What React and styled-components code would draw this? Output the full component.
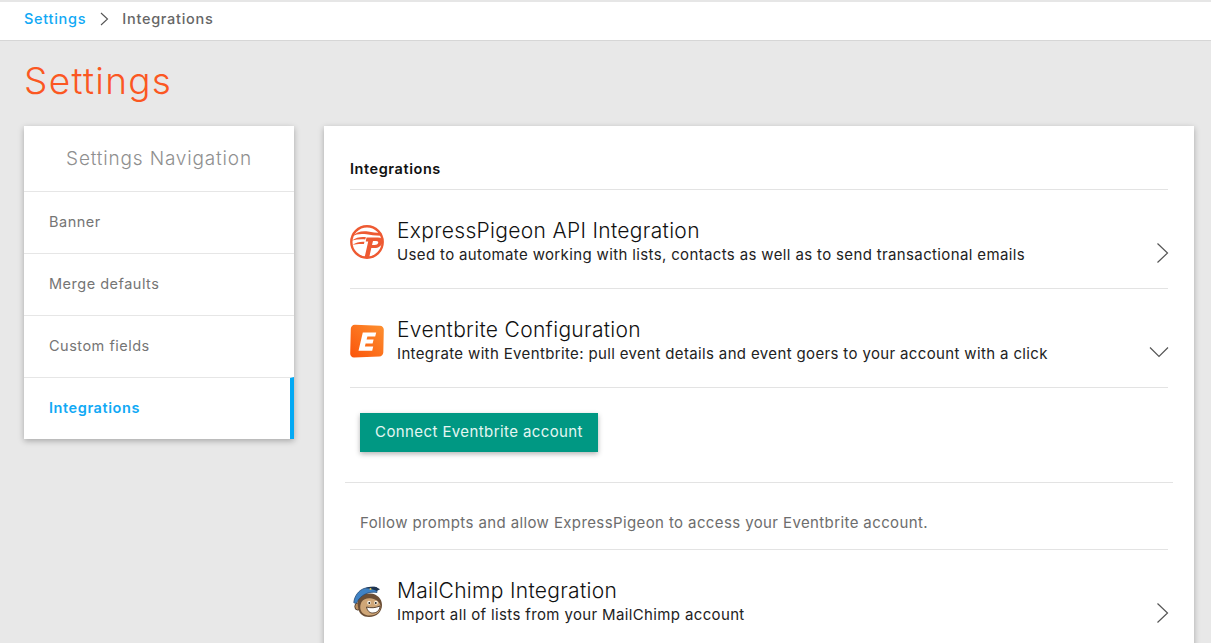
import React from "react";
import styled, { createGlobalStyle } from "styled-components";

const GlobalStyle = createGlobalStyle`
  html, body {
    margin: 0;
    height: 100%;
    overflow: hidden;
    background: #e8e8e8;
  }
  * {
    box-sizing: border-box;
  }
  body {
    font-family: Inter, "Open Sans", "Liberation Sans", sans-serif;
  }
`;

const Page = styled.div`
  height: 643px;
  overflow: hidden;
  background: #e8e8e8;
`;

const TopBar = styled.div`
  height: 41px;
  background: #fff;
  border-top: 2px solid #e6e6e6;
  border-bottom: 1px solid #d6d6d6;
  display: flex;
  align-items: center;
  padding: 0 0 5px 24px;
  font-size: 14.5px;
  font-weight: 500;
  letter-spacing: 0.72px;
`;

const Crumb = styled.span`
  color: ${(p) => (p.$active ? "#11a9f5" : "#666")};
`;

const CrumbArrow = styled.svg`
  width: 9px;
  height: 14px;
  margin: 0 13px 0 14px;
`;

const Title = styled.h1`
  margin: 0;
  height: 85px;
  padding: 18px 0 0 24px;
  font-size: 37px;
  line-height: 44px;
  font-weight: 300;
  letter-spacing: 1.3px;
  color: #fb5722;
`;

const Columns = styled.div`
  display: flex;
  align-items: flex-start;
  gap: 30px;
  padding: 0 17px 0 24px;
`;

const Sidebar = styled.nav`
  width: 270px;
  flex: none;
  background: #fff;
  box-shadow: 0 2px 6px rgba(0, 0, 0, 0.28);
`;

const SidebarTitle = styled.div`
  height: 65px;
  display: flex;
  align-items: center;
  justify-content: center;
  font-size: 19px;
  font-weight: 300;
  letter-spacing: 0.83px;
  color: #8f8f8f;
`;

const NavItem = styled.div`
  height: 62px;
  display: flex;
  align-items: center;
  padding: 0 0 3px 25px;
  border-top: 1px solid #e6e6e6;
  border-right: ${(p) => (p.$active ? "4px solid #03a9f4" : "none")};
  font-size: 14.5px;
  font-weight: ${(p) => (p.$active ? 600 : 400)};
  letter-spacing: ${(p) => (p.$active ? "0.58px" : "0.5px")};
  color: ${(p) => (p.$active ? "#11a9f5" : "#757575")};
`;

const Main = styled.main`
  flex: 1;
  height: 540px;
  background: #fff;
  box-shadow: 0 2px 6px rgba(0, 0, 0, 0.28);
  padding: 0 26px;
`;

const SectionTitle = styled.div`
  height: 64px;
  padding-top: 34px;
  font-size: 14.5px;
  line-height: 18px;
  font-weight: 600;
  letter-spacing: 0.57px;
  color: #111;
  border-bottom: 1px solid #e3e3e3;
`;

const Row = styled.div`
  height: 99px;
  display: flex;
  align-items: center;
  gap: 13px;
  padding-top: 6px;
  border-bottom: 1px solid ${(p) => (p.$plain ? "transparent" : "#e3e3e3")};
`;

const RowIcon = styled.svg`
  width: 34px;
  height: 34px;
  flex: none;
`;

const RowText = styled.div`
  flex: 1;
`;

const RowTitle = styled.div`
  font-size: 21px;
  line-height: 24px;
  font-weight: 300;
  letter-spacing: 0.32px;
  color: #111;
`;

const RowSub = styled.div`
  font-size: 15px;
  line-height: 23px;
  letter-spacing: 0.36px;
  color: #222;
`;

const Chevron = styled.svg`
  flex: none;
  width: 20px;
  height: 20px;
  margin-top: 22px;
  margin-right: ${(p) => (p.$down ? "-1px" : "-5px")};
`;

const ButtonZone = styled.div`
  height: 95px;
  margin: 0 -5px;
  padding: 25px 15px 0;
  border-bottom: 1px solid #e3e3e3;
`;

const ConnectButton = styled.button`
  width: 238px;
  height: 39px;
  padding: 0 0 2px;
  border: none;
  border-radius: 0;
  background: #009883;
  box-shadow: 0 2px 5px rgba(0, 0, 0, 0.3);
  color: #e4f6f2;
  font-family: inherit;
  font-size: 15px;
  font-weight: 400;
  letter-spacing: 0.4px;
`;

const Hint = styled.div`
  height: 67px;
  padding: 30px 10px 0;
  font-size: 15px;
  line-height: 20px;
  letter-spacing: 0.39px;
  color: #6d6d6d;
  border-bottom: 1px solid #e3e3e3;
`;

const PigeonLogo = () => (
  <RowIcon viewBox="0 0 34 34">
    <circle cx="17" cy="17" r="15.7" fill="none" stroke="#ee5a32" strokeWidth="2.4" />
    <path d="M2 11.500C6 7 12 5.500 18 6.500c4 .7 8 1.500 13 1.500l1 2.600c-6 .2-11-.6-15.500-1.300C11 8.500 6 9 2 11.500z" fill="#ee5a32" />
    <path d="M2 15.500c4-3 9-4 14-3.300l-.8 2.300c-4.500-.5-9 .1-13.200 1z" fill="#ee5a32" />
    <path d="M2.500 20c3.500-2.500 7.500-3.500 12-3.200l-.6 2.200c-4-.2-8 0-11.400 1z" fill="#ee5a32" />
    <path d="M16.500 12.500H28c4 0 5 2.500 4.300 5.200-.8 3.200-3.800 5.300-7.800 5.300h-3.200L19.300 32h-4.600l3.500-15.500h-2.500z" fill="#ee5a32" />
    <path d="M23 16l-1 4h2.700c1.800 0 3.200-.8 3.500-2.200.2-1.100-.5-1.800-2-1.800z" fill="#fff" />
  </RowIcon>
);

const EventbriteLogo = () => (
  <RowIcon viewBox="0 0 34 34">
    <defs>
      <linearGradient id="ebFill" x1="0" y1="1" x2="1" y2="0">
        <stop offset="0" stopColor="#fb540a" />
        <stop offset="1" stopColor="#fd9030" />
      </linearGradient>
    </defs>
    <path d="M5 .8 30 1.800c2.200.1 3.800 1.800 3.800 4L33.300 28.500c-.1 2.300-1.800 4-4 4L4 33.400c-2.200 0-3.900-1.700-3.800-4L.8 4.800C.9 2.400 2.700.7 5 .8z" fill="url(#ebFill)" />
    <path d="M12.800 8.500h13.400l-1 4H17.400l-.8 3h7l-1 4h-7l-.7 3h8.300l-1 4.200H8.500z" fill="#fff" />
  </RowIcon>
);

const MailChimpLogo = () => (
  <RowIcon viewBox="0 0 34 34">
    <ellipse cx="7.800" cy="21.500" rx="3" ry="3.600" fill="#b98d5e" stroke="#4a3626" strokeWidth=".9" />
    <path d="M8 14C10 10 15 8 20.500 8.500 27 9 32 13.500 32 20c0 6.500-5 12-13 12-6 0-9.500-3.200-10.500-7.500C7.700 21 7.300 17 8 14z" fill="#6b4e35" />
    <path d="M11.500 17c2-3 5-4 8.500-3.800 5 .3 10 3.200 10.500 7.800.4 5-3.500 9.500-11 9.500-5 0-8-2.500-9-6-.6-2.500-.2-5 1-7.500z" fill="#cfa677" />
    <ellipse cx="19" cy="17.800" rx="1.800" ry="2" fill="#f8f1e3" />
    <ellipse cx="26" cy="17.800" rx="1.800" ry="2" fill="#f8f1e3" />
    <circle cx="19.300" cy="18" r=".9" fill="#1c1c1c" />
    <circle cx="25.800" cy="18" r=".9" fill="#1c1c1c" />
    <path d="M16.500 22c4.200 1.200 9 1 13.500-1 0 4.500-3.500 7-7.300 7-3.300 0-5.500-2.400-6.200-6z" fill="#fff" stroke="#4a3626" strokeWidth=".9" />
    <path d="M3.800 17.500C4.500 11 8.500 5.500 14 3.500 18 2.200 23 2 26.500 2.500l.5 5C19 6 10.500 9.500 6.500 18c-1 .5-2.200.3-2.700-.5z" fill="#3f82c4" stroke="#2b4d75" strokeWidth=".8" />
    <path d="M15.500 3c3.500-1.200 7.500-1.600 11-.8L30 4.200 26.800 6c-3-1.500-7-2.500-11.300-3z" fill="#1e3450" />
    <circle cx="20.500" cy="4" r="1" fill="#e7c64a" />
  </RowIcon>
);

const ChevronRight = () => (
  <Chevron viewBox="0 0 20 20">
    <path d="M4.500 .5l10 9.500-10 9.500" fill="none" stroke="#555" strokeWidth="1.200" />
  </Chevron>
);

const ChevronDown = () => (
  <Chevron viewBox="0 0 20 20" $down>
    <path d="M1 5.500l9 9 9-9" fill="none" stroke="#555" strokeWidth="1.200" />
  </Chevron>
);

const navItems = ["Banner", "Merge defaults", "Custom fields", "Integrations"];

const App = () => {
  return (
    <Page>
      <GlobalStyle />
      <TopBar>
        <Crumb $active>Settings</Crumb>
        <CrumbArrow viewBox="0 0 9 14">
          <path d="M1 1l6.500 6L1 13" fill="none" stroke="#555" strokeWidth="1.100" />
        </CrumbArrow>
        <Crumb>Integrations</Crumb>
      </TopBar>
      <Title>Settings</Title>
      <Columns>
        <Sidebar>
          <SidebarTitle>Settings Navigation</SidebarTitle>
          {navItems.map((item) => (
            <NavItem key={item} $active={item === "Integrations"}>
              {item}
            </NavItem>
          ))}
        </Sidebar>
        <Main>
          <SectionTitle>Integrations</SectionTitle>
          <Row>
            <PigeonLogo />
            <RowText>
              <RowTitle>ExpressPigeon API Integration</RowTitle>
              <RowSub>Used to automate working with lists, contacts as well as to send transactional emails</RowSub>
            </RowText>
            <ChevronRight />
          </Row>
          <Row>
            <EventbriteLogo />
            <RowText>
              <RowTitle>Eventbrite Configuration</RowTitle>
              <RowSub>Integrate with Eventbrite: pull event details and event goers to your account with a click</RowSub>
            </RowText>
            <ChevronDown />
          </Row>
          <ButtonZone>
            <ConnectButton>Connect Eventbrite account</ConnectButton>
          </ButtonZone>
          <Hint>Follow prompts and allow ExpressPigeon to access your Eventbrite account.</Hint>
          <Row $plain>
            <MailChimpLogo />
            <RowText>
              <RowTitle>MailChimp Integration</RowTitle>
              <RowSub>Import all of lists from your MailChimp account</RowSub>
            </RowText>
            <ChevronRight />
          </Row>
        </Main>
      </Columns>
    </Page>
  );
};

export default App;
